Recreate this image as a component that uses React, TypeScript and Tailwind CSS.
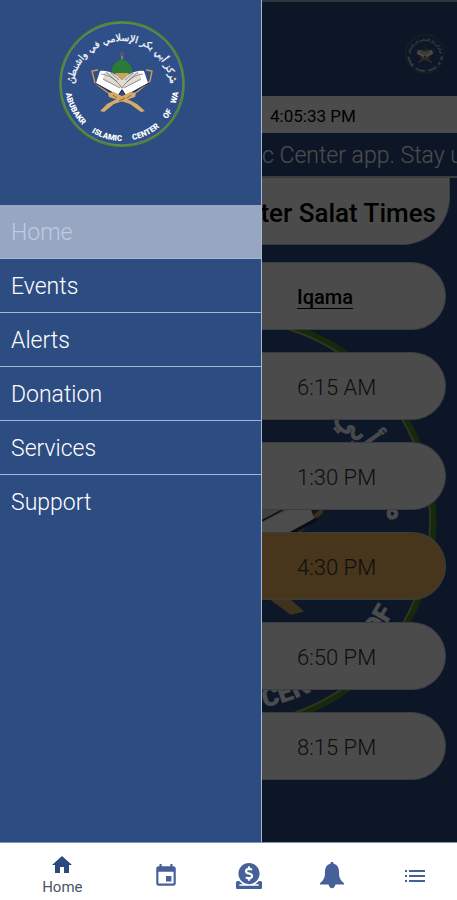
import { useId } from "react";
import { FaDonate } from "react-icons/fa";
import { MdEvent, MdHome } from "react-icons/md";

const words = [
  { text: "ABUBAKR", at: "15.5%" },
  { text: "ISLAMIC", at: "41%" },
  { text: "CENTER", at: "64.5%" },
  { text: "OF", at: "81.5%" },
  { text: "WA", at: "92%" },
];

function Logo({ className }: { className: string }) {
  const id = useId();
  return (
    <svg viewBox="-64 -64 128 128" className={className} role="img" aria-label="Abubakr Islamic Center of WA">
      <defs>
        <path id={`${id}-top`} d="M-49 6A49 49 0 1 1 49 6" />
        <path id={`${id}-bottom`} d="M-57 0A57 57 0 0 0 57 0" />
      </defs>
      <circle r="62" fill="#2f4f88" stroke="#4c8a26" strokeWidth="1.8" />
      <circle r="61" fill="none" stroke="#a8b860" strokeWidth="0.5" />
      <text
        fill="#f4f6fa"
        stroke="#f4f6fa"
        strokeWidth="0.3"
        fontSize="9.5"
        textAnchor="middle"
        direction="rtl"
        fontFamily="'DejaVu Sans', sans-serif"
      >
        <textPath href={`#${id}-top`} startOffset="50%">
          مركز أبي بكر الإسلامي في واشنطن
        </textPath>
      </text>
      <g fill="#ffffff" fontSize="8" fontWeight="900" textAnchor="middle" fontFamily="Roboto, sans-serif">
        {words.map((word) => (
          <text key={word.text}>
            <textPath href={`#${id}-bottom`} startOffset={word.at}>
              {word.text}
            </textPath>
          </text>
        ))}
      </g>
      <circle cx="-53" cy="-5" r="1.3" fill="#d9c48c" />
      <circle cx="53" cy="-5" r="1.3" fill="#d9c48c" />
      <path d="M0 -28V-23" stroke="#b9b39a" strokeWidth="1" />
      <path d="M0 -31.500a1.600 1.600 0 1 1 -.1 0z" fill="none" stroke="#a5605a" strokeWidth="0.7" />
      <path d="M-10 -11C-11 -20 -5 -23 0 -25C5 -23 11 -20 10 -11Z" fill="#2c7a35" />
      <g fill="none" stroke="#c79a5a" strokeWidth="1.400" strokeLinejoin="round">
        <path d="M-24 -14L-30 -13L-27 -1L-15 8L-6 13" />
        <path d="M24 -14L30 -13L28 -3L15 8L6 13" />
      </g>
      <path d="M-22 -13C-14 -14 -6 -10 0 -3C6 -10 14 -14 22 -13L26 -1L4 11L0 5L-4 11L-26 -1Z" fill="#ffffff" />
      <path d="M-18 -11C-11 -13 -5 -10 0 -4C5 -10 11 -13 18 -11L19 -4L0 5L-19 -4Z" fill="#e0dcd0" />
      <path d="M-7 -11H7L4 -7L0 -4L-4 -7Z" fill="#c9a165" />
      <g fill="none" stroke="#3a4157" strokeWidth="0.5">
        <path d="M-21 -10C-13 -9 -6 -5 0 4C6 -5 13 -9 21 -10" />
        <path d="M-19 -5L-2 4M19 -5L2 4" />
        <path d="M-16 -12L-5 -2M-11 -11L-3 -4M16 -12L5 -2M11 -11L3 -4" />
        <path d="M-27 -1L-4 12L0 6L4 12L27 -1" stroke="#222b44" strokeWidth="1" />
      </g>
      <g fill="#d6ab66">
        <path d="M-14 9L-8 8L15 20L23 27L19 28L8 20L-13 13Z" />
        <path d="M14 9L8 8L-15 20L-22 27L-18 28L-8 20L13 13Z" />
      </g>
      <path d="M-9 11L-5 14M9 11L5 14M-3 17L3 14" stroke="#8a6430" strokeWidth="1" />
    </svg>
  );
}

function BellIcon() {
  return (
    <svg viewBox="0 0 24 27" className="h-[27px] w-6" fill="currentColor" aria-hidden="true">
      <path d="M12 0c1 0 1.600.7 1.600 1.700 3.800.9 5.400 4.100 5.400 8 0 6 1.200 8.300 5 11.500v1.300H0v-1.300c3.800-3.200 5-5.500 5-11.500 0-3.900 1.600-7.100 5.400-8C10.400.7 11 0 12 0Z" />
      <path d="M8.500 22h7c-.3 2.600-1.700 4.200-3.500 4.200s-3.200-1.600-3.500-4.200Z" />
    </svg>
  );
}

function ListIcon() {
  return (
    <svg viewBox="0 0 20 12" className="h-3 w-5" fill="currentColor" aria-hidden="true">
      <path d="M0 0h2v2H0zM4 0h16v2H4zM0 5h2v2H0zM4 5h16v2H4zM0 10h2v2H0zM4 10h16v2H4z" />
    </svg>
  );
}

const menu = ["Home", "Events", "Alerts", "Donation", "Services", "Support"];
const times = ["6:15 AM", "1:30 PM", "4:30 PM", "6:50 PM", "8:15 PM"];
const pill = "flex h-[68px] items-center rounded-r-full border border-l-0 border-[#c4ccd8] pl-[35px] pt-[2px]";

const tabs = [
  { name: "Events", icon: <MdEvent size={26} /> },
  { name: "Donation", icon: <FaDonate size={26} /> },
  { name: "Alerts", icon: <BellIcon /> },
  { name: "More", icon: <ListIcon /> },
];

export default function App() {
  return (
    <div className="flex min-h-screen flex-col bg-white font-['Roboto',sans-serif]">
      <div className="flex flex-1 border-b border-[#8593a8]">
        <aside className="w-[262px] shrink-0 border-r border-[#a9b8d0] bg-[#2d4c82]">
          <div className="flex h-[205px] justify-center pt-5 pr-[18px]">
            <Logo className="size-32" />
          </div>
          <nav aria-label="Main menu">
            <ul>
              {menu.map((item) => (
                <li key={item} className="h-[54px] border-b border-[#a4b6d2] last:border-transparent">
                  <a
                    href="#"
                    aria-current={item === "Home" ? "page" : undefined}
                    className="flex h-full items-center pl-[11px] pt-1 text-[23px] font-light text-white aria-[current=page]:bg-[#97a6c1] aria-[current=page]:text-[#bfcce4]"
                  >
                    {item}
                  </a>
                </li>
              ))}
            </ul>
          </nav>
        </aside>

        <main className="relative min-w-0 flex-1 overflow-hidden bg-[#2b4b80]">
          <Logo className="absolute top-[310px] -left-[246px] size-[424px] max-w-none" />
          <div className="relative">
            <header className="flex h-24 items-start justify-end border-t-2 border-[#a4b0c4] pt-8 pr-3">
              <Logo className="size-10" />
            </header>
            <div className="flex h-[37px] items-center bg-[#fafafa] pt-1 pl-2 text-[17px] text-black">4:05:33 PM</div>
            <div className="flex h-[45px] items-center overflow-hidden border-b-2 border-[#c4ccd8] bg-[#2b4b80] pt-1 text-[23px] font-light whitespace-nowrap text-white">
              c Center app. Stay u
            </div>
            <h1 className="mr-[7px] flex h-[67px] items-center justify-end overflow-hidden rounded-br-[48px] border-r border-b border-[#c4ccd8] bg-[#fafafa] pt-1 pr-[13px] text-[26px] font-medium whitespace-nowrap text-black">
              ter Salat Times
            </h1>
            <div className="mt-[17px] mr-[11px] flex flex-col gap-[22px]">
              <h2 className={`${pill} bg-[#fafafa] text-[20px] font-medium text-black underline decoration-1 underline-offset-4`}>
                Iqama
              </h2>
              {times.map((time) => (
                <div
                  key={time}
                  className={`${pill} text-[22px] font-light text-[#333] ${time === "4:30 PM" ? "bg-[#efb45f]" : "bg-[#fafafa]"}`}
                >
                  {time}
                </div>
              ))}
            </div>
          </div>
          <div className="absolute inset-0 bg-black/70" />
        </main>
      </div>

      <nav aria-label="Tabs" className="flex h-[57px] text-[#46609a]">
        <button type="button" className="flex flex-3 flex-col items-center pt-[10px] text-[#2b4b80]">
          <MdHome size={24} />
          <span className="text-[15px] leading-5 text-[#4a5568]">Home</span>
        </button>
        {tabs.map((tab) => (
          <button key={tab.name} type="button" aria-label={tab.name} className="flex flex-2 items-center justify-center pt-2">
            {tab.icon}
          </button>
        ))}
      </nav>
    </div>
  );
}
